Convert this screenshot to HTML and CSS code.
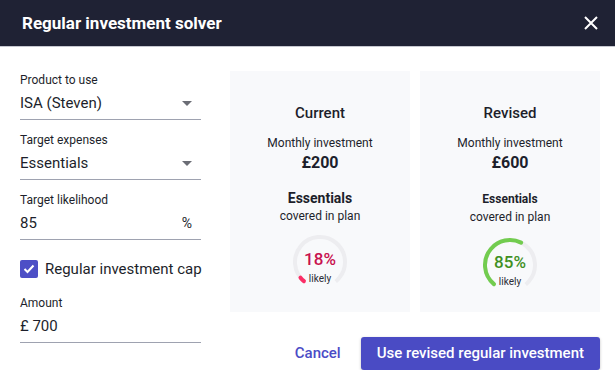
FILE: index.html
```html
<!DOCTYPE html>
<html lang="en">

<head>
    <meta charset="UTF-8" />
    <title>Regular investment solver</title>
    <link rel="stylesheet" href="styles.css">
</head>

<body>

    <header class="dialog-header">
        <h1>Regular investment solver</h1>
        <button class="close-btn" aria-label="Close">
            <svg width="14" height="14" viewBox="0 0 14 14">
                <path d="M1 1 L13 13 M13 1 L1 13" stroke="#fff" stroke-width="2" fill="none" />
            </svg>
        </button>
    </header>

    <div class="dialog-body">
        <div class="form-col">
            <div class="field">
                <label>Product to use</label>
                <div class="field-row">
                    <span class="value">ISA (Steven)</span>
                    <span class="caret"></span>
                </div>
            </div>

            <div class="field">
                <label>Target expenses</label>
                <div class="field-row">
                    <span class="value">Essentials</span>
                    <span class="caret"></span>
                </div>
            </div>

            <div class="field">
                <label>Target likelihood</label>
                <div class="field-row">
                    <span class="value">85</span>
                    <span class="suffix">%</span>
                </div>
            </div>

            <div class="check-row">
                <span class="checkbox">
                    <svg width="12" height="10" viewBox="0 0 12 10">
                        <path d="M1.5 5 L4.5 8 L10.5 1.5" stroke="#fff" stroke-width="2" fill="none" />
                    </svg>
                </span>
                <span>Regular investment cap</span>
            </div>

            <div class="field">
                <label>Amount</label>
                <div class="field-row">
                    <span class="value">£ 700</span>
                </div>
            </div>
        </div>

        <div class="result-col">
            <div class="cards">
                <div class="card">
                    <h2>Current</h2>
                    <div class="sub">Monthly investment</div>
                    <div class="amount">£200</div>
                    <div class="target">Essentials</div>
                    <div class="sub">covered in plan</div>
                    <div class="gauge">
                        <svg width="56" height="56" viewBox="0 0 56 56">
                            <circle cx="28" cy="28" r="25" fill="none" stroke="#ededf0" stroke-width="4"
                                stroke-dasharray="122 157" transform="rotate(130 28 28)" />
                            <circle cx="28" cy="28" r="25" fill="none" stroke="#fb2e66" stroke-width="4"
                                stroke-linecap="round" stroke-dasharray="5 157" transform="rotate(130 28 28)" />
                        </svg>
                        <span class="pct low">18%</span>
                        <span class="likely">likely</span>
                    </div>
                </div>

                <div class="card revised">
                    <h2>Revised</h2>
                    <div class="sub">Monthly investment</div>
                    <div class="amount">£600</div>
                    <div class="target">Essentials</div>
                    <div class="sub">covered in plan</div>
                    <div class="gauge">
                        <svg width="56" height="56" viewBox="0 0 56 56">
                            <circle cx="28" cy="28" r="25" fill="none" stroke="#ededf0" stroke-width="4"
                                stroke-dasharray="122 157" transform="rotate(130 28 28)" />
                            <circle cx="28" cy="28" r="25" fill="none" stroke="#72cc4f" stroke-width="4"
                                stroke-linecap="round" stroke-dasharray="72 157" transform="rotate(130 28 28)" />
                        </svg>
                        <span class="pct high">85%</span>
                        <span class="likely">likely</span>
                    </div>
                </div>
            </div>

            <div class="actions">
                <button class="btn-text">Cancel</button>
                <button class="btn-primary">Use revised regular investment</button>
            </div>
        </div>
    </div>

</body>

</html>
```

FILE: styles.css
```css
body {
    font-family: Roboto, "Liberation Sans", sans-serif;
    background: #fff;
    color: #1d1f2b;
    margin: 0;
    padding: 0;
}

.dialog-header {
    display: flex;
    align-items: center;
    justify-content: space-between;
    height: 46px;
    background: #1f2234;
    border-bottom: 1px solid #c6c8d0;
    padding: 0 17px 0 22px;
}

.dialog-header h1 {
    margin: 0;
    font-size: 17px;
    font-weight: 700;
    color: #fff;
}

.close-btn {
    background: none;
    border: none;
    padding: 0;
    display: flex;
    cursor: pointer;
}

.dialog-body {
    display: flex;
    padding: 24px 15px 0 20px;
    gap: 29px;
}

.form-col {
    width: 181px;
    flex-shrink: 0;
    padding-top: 1px;
}

.field {
    margin-bottom: 12px;
}

.field label {
    display: block;
    font-size: 12px;
    line-height: 16px;
    color: #1d1f2b;
}

.field-row {
    display: flex;
    align-items: center;
    justify-content: space-between;
    padding: 5px 0 6px;
    border-bottom: 1px solid #9ea2b0;
    font-size: 15px;
    line-height: 20px;
}

.caret {
    width: 0;
    height: 0;
    border-left: 5px solid transparent;
    border-right: 5px solid transparent;
    border-top: 5px solid #6b6d75;
    margin-right: 9px;
}

.suffix {
    margin-right: 9px;
    font-size: 14px;
}

.check-row {
    display: flex;
    align-items: center;
    gap: 7px;
    margin: 19px 0 16px;
    font-size: 15px;
    line-height: 20px;
    white-space: nowrap;
}

.checkbox {
    width: 18px;
    height: 18px;
    flex-shrink: 0;
    border-radius: 2px;
    background: #4d4fc6;
    display: flex;
    align-items: center;
    justify-content: center;
}

.result-col {
    flex: 1;
    display: flex;
    flex-direction: column;
}

.cards {
    display: flex;
    gap: 10px;
}

.card {
    flex: 1;
    height: 241px;
    background: #f8f9fb;
    display: flex;
    flex-direction: column;
    align-items: center;
    padding-top: 32px;
    box-sizing: border-box;
}

.card h2 {
    margin: 0;
    font-size: 15px;
    line-height: 20px;
    font-weight: 500;
}

.card .sub {
    font-size: 12px;
    line-height: 18px;
    margin-top: 11px;
}

.card .amount {
    font-size: 16px;
    line-height: 20px;
    font-weight: 700;
    margin-top: 1px;
}

.card .target {
    font-size: 14px;
    line-height: 20px;
    font-weight: 700;
    margin-top: 15px;
}

.card .target + .sub {
    margin-top: 0;
    line-height: 16px;
}

.card.revised .target {
    font-size: 12px;
    margin-top: 16px;
}

.gauge {
    position: relative;
    width: 56px;
    height: 56px;
    margin-top: 10px;
}

.card.revised .gauge {
    margin-top: 12px;
}

.gauge svg {
    display: block;
}

.gauge .pct {
    position: absolute;
    left: 0;
    right: 0;
    top: 15px;
    text-align: center;
    font-size: 17px;
    font-weight: 500;
    line-height: 20px;
}

.pct.low {
    color: #c8114f;
}

.pct.high {
    color: #3f901f;
}

.gauge .likely {
    position: absolute;
    left: 0;
    right: 0;
    top: 39px;
    text-align: center;
    font-size: 10px;
    line-height: 12px;
    color: #2a2c36;
}

.actions {
    display: flex;
    justify-content: flex-end;
    align-items: center;
    gap: 4px;
    margin-top: 24px;
}

.actions button {
    font-family: Roboto, "Liberation Sans", sans-serif;
    font-size: 15px;
    font-weight: 500;
    cursor: pointer;
    border: none;
}

.btn-text {
    background: none;
    color: #4b4cc6;
    padding: 8px 16px;
}

.btn-primary {
    background: #4a4bc4;
    color: #fff;
    height: 33px;
    padding: 0 16px;
    border-radius: 3px;
    box-shadow: 0 1px 3px rgba(0, 0, 0, 0.25);
}
```
